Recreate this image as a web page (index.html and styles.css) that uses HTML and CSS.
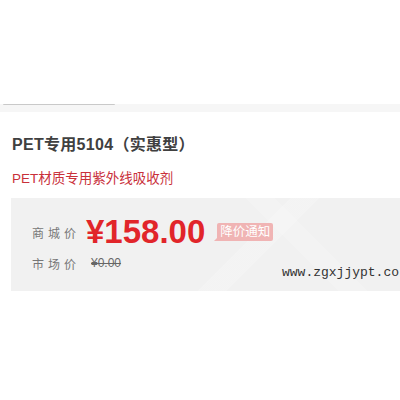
FILE: index.html
```html
<!DOCTYPE html>
<html lang="zh-CN">

<head>
  <meta charset="UTF-8">
  <title>PET专用5104（实惠型）</title>
  <link rel="stylesheet" href="styles.css">
</head>

<body>
  <div class="gap"></div>
  <div class="tabbar"><span class="tab"></span></div>

  <main class="info">
    <h1 class="title">PET专用5104（实惠型）</h1>
    <p class="subtitle">PET材质专用紫外线吸收剂</p>

    <section class="price-box">
      <div class="row">
        <span class="label">商城价</span>
        <strong class="price">¥158.00</strong>
        <a class="notify" href="#">降价通知</a>
      </div>
      <div class="row">
        <span class="label">市场价</span>
        <del class="market">¥0.00</del>
      </div>
      <span class="watermark">www.zgxjjypt.co</span>
    </section>
  </main>
</body>

</html>
```

FILE: styles.css
```css
:root {
  --text: #404040;
  --muted: #666;
  --red: #e1252a;
  --dark-red: #c9303a;
  --box: #f1f1f1;
}

html,
body {
  margin: 0;
  background: #fff;
  overflow: hidden;
}

body {
  font-family: "Liberation Sans", "Noto Sans CJK SC", sans-serif;
  color: var(--text);
}

.gap {
  block-size: 104px;
}

.tabbar {
  block-size: 8px;
  background: #f6f6f6;
}

.tab {
  display: block;
  inline-size: 112px;
  margin-inline-start: 3px;
  border-top: 1px solid #c9c9c9;
  border-radius: 0 0 4px 4px;
}

.info {
  padding-inline-start: 11px;
}

.title {
  margin: 21px 0 0 1px;
  font-size: 16px;
  line-height: 24px;
  font-weight: 700;
  letter-spacing: 0.3px;
}

.subtitle {
  margin: 12px 0 0 1px;
  font-size: 13.5px;
  line-height: 20px;
  color: var(--dark-red);
}

.price-box {
  position: relative;
  margin-block-start: 9px;
  block-size: 93px;
  box-sizing: border-box;
  padding: 16px 0 0 21px;
  background:
    linear-gradient(135deg, transparent 58%, rgba(255, 255, 255, 0.18) 58%, rgba(255, 255, 255, 0.18) 64%, transparent 64%),
    linear-gradient(45deg, transparent 68%, rgba(255, 255, 255, 0.15) 68%, rgba(255, 255, 255, 0.15) 74%, transparent 74%),
    var(--box);
}

.row {
  display: flex;
  align-items: center;
}

.row+.row {
  margin-block-start: 3px;
}

.label {
  inline-size: 54px;
  font-size: 12px;
  letter-spacing: 4px;
  color: #777;
}

.price {
  font-size: 33px;
  line-height: 36px;
  font-weight: 700;
  color: var(--red);
}

.notify {
  position: relative;
  margin-inline-start: 12px;
  padding: 0 3px;
  font-size: 12.5px;
  line-height: 18px;
  color: #fff;
  text-decoration: none;
  background: #f0b4b4;
  border-radius: 2px;
}

.notify::after {
  content: "";
  position: absolute;
  left: -3px;
  bottom: 0;
  border-style: solid;
  border-width: 0 0 5px 5px;
  border-color: transparent transparent #f0b4b4 transparent;
}

.market {
  margin-inline-start: 5px;
  font-size: 12px;
  line-height: 20px;
  color: var(--muted);
}

.watermark {
  position: absolute;
  left: 271px;
  top: 67px;
  font-family: "Liberation Mono", monospace;
  font-size: 13px;
  color: #333;
  white-space: nowrap;
}
```
